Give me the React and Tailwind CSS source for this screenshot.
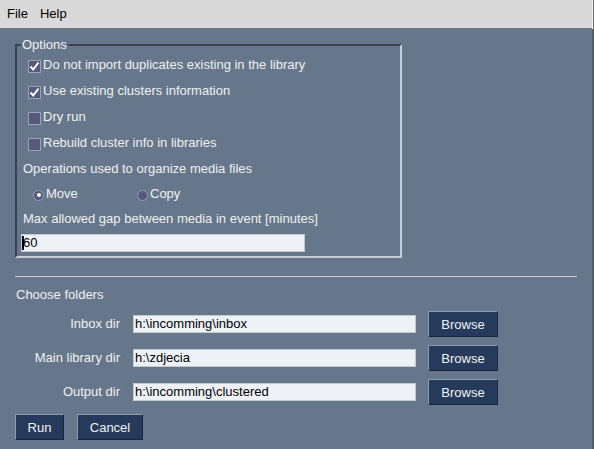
import { useState } from 'react'

const font = { fontFamily: '"Liberation Sans", Arial, sans-serif' }

function Check({ checked, label }) {
  return (
    <div className="flex items-center h-[26px] pl-[11px]">
      <span className="w-[13px] h-[13px] mt-[3px] border border-[#9aa3b5] bg-[#57587c] flex items-center justify-center">
        {checked && (
          <svg width="11" height="11" viewBox="0 0 11 11">
            <path d="M1.5 5.5 L4.2 8.5 L9.5 1.5" stroke="#ffffff" strokeWidth="2" fill="none" />
          </svg>
        )}
      </span>
      <span className="ml-[2px]">{label}</span>
    </div>
  )
}

function Radio({ checked, label }) {
  return (
    <span className="flex items-center">
      <span className="w-[11px] h-[11px] mt-[2px] rounded-full border border-[#9aa3b5] bg-[#57587c] flex items-center justify-center">
        {checked && <span className="w-[4px] h-[4px] rounded-full bg-white" />}
      </span>
      <span className="ml-[2px]">{label}</span>
    </span>
  )
}

function Btn({ children, w }) {
  return (
    <button
      className={`${w} h-[26px] bg-[#263a5b] text-[#f2f2f2] border border-t-[#8e9cb2] border-l-[#8e9cb2] border-b-[#172640] border-r-[#172640] text-[13px] leading-none`}
    >
      {children}
    </button>
  )
}

function FolderRow({ label, value }) {
  return (
    <div className="flex items-center h-[34px]">
      <span className="w-[105px] text-right">{label}</span>
      <div className="ml-[13px] w-[283px] h-[18px] bg-[#eef2f7] border border-[#c2c8d0] text-black flex items-center pl-[1px]">
        {value}
      </div>
      <div className="ml-[12px]">
        <Btn w="w-[70px]">Browse</Btn>
      </div>
    </div>
  )
}

export default function App() {
  const [gap] = useState('60')
  return (
    <div className="w-[594px] h-[449px] flex text-[13px] overflow-hidden" style={font}>
      <div className="flex-1 flex flex-col">
        {/* menu */}
        <div className="h-[29px] bg-[#d9d9d9] border-b border-[#7a7a7a] flex items-center text-black pl-[7px] gap-[12px]">
          <span>File</span>
          <span>Help</span>
        </div>

        <div className="flex-1 bg-[#66778b] text-[#f0f0f0] pl-[15px]">
          <fieldset className="mt-[8px] w-[387px] h-[221px] border-2 border-t-[#39434f] border-l-[#39434f] border-b-[#c6cdd6] border-r-[#c6cdd6]">
            <legend className="ml-[4px] px-[1px] leading-[15px]">Options</legend>
            <Check checked label="Do not import duplicates existing in the library" />
            <Check checked label="Use existing clusters information" />
            <Check label="Dry run" />
            <Check label="Rebuild cluster info in libraries" />
            <div className="h-[24px] flex items-center pl-[6px] pt-[1px]">Operations used to organize media files</div>
            <div className="h-[26px] flex items-center pl-[16px] pt-[2px]">
              <div className="w-[104px]">
                <Radio checked label="Move" />
              </div>
              <Radio label="Copy" />
            </div>
            <div className="h-[22px] flex items-center pl-[6px] pt-[3px]">Max allowed gap between media in event [minutes]</div>
            <div className="mt-[6px] ml-[4px] w-[284px] h-[18px] bg-[#eef2f7] border border-[#c2c8d0] text-black flex items-center">
              <span className="w-[2px] h-[14px] bg-black" />
              <span className="-ml-[1px]">{gap}</span>
            </div>
          </fieldset>

          <div className="mt-[18px] w-[562px] h-[1px] bg-[#c9ced6]" />

          <div className="h-[30px] flex items-center pt-[5px] pl-[1px]">Choose folders</div>

          <FolderRow label="Inbox dir" value="h:\incomming\inbox" />
          <FolderRow label="Main library dir" value="h:\zdjecia" />
          <FolderRow label="Output dir" value="h:\incomming\clustered" />

          <div className="mt-[5px] flex gap-[13px]">
            <Btn w="w-[49px]">Run</Btn>
            <Btn w="w-[66px]">Cancel</Btn>
          </div>
        </div>
      </div>
      <div className="w-[2px] flex flex-col">
        <div className="h-[29px] bg-[#6e6e6e] border-l border-[#f0f0f0]" />
        <div className="flex-1 bg-[#525d6a]" />
      </div>
    </div>
  )
}
